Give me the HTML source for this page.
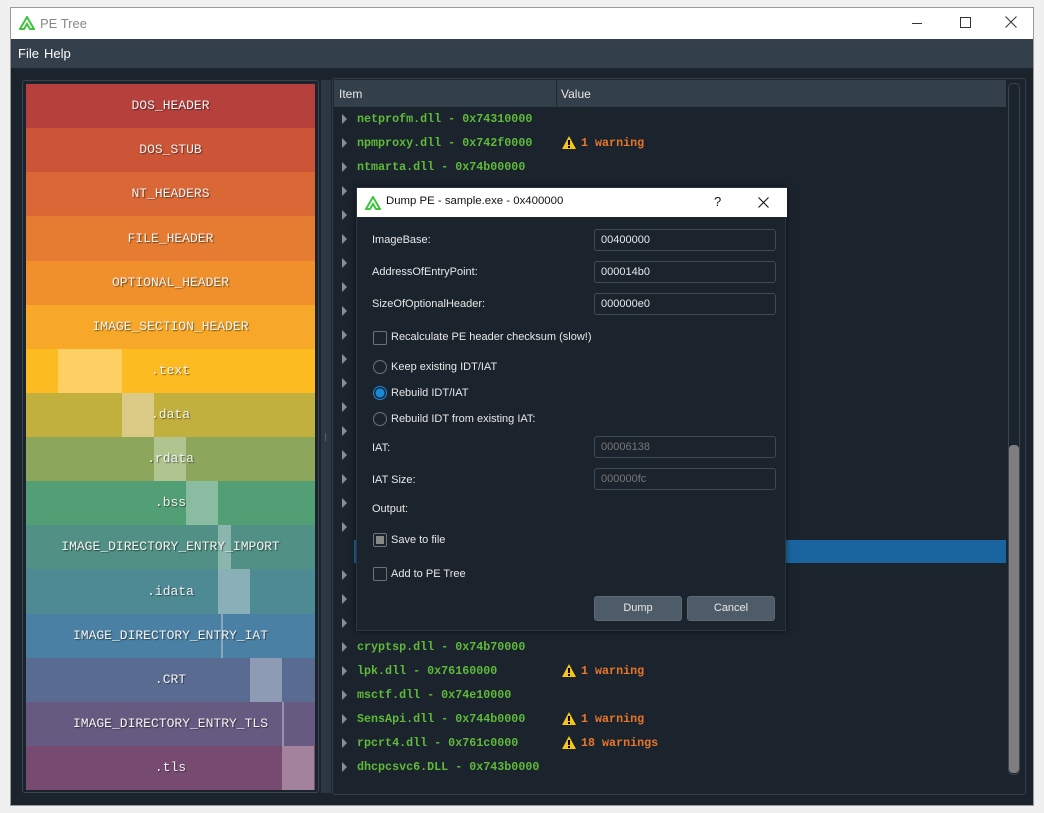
<!DOCTYPE html>
<html><head><meta charset="utf-8"><style>
*{box-sizing:border-box;margin:0;padding:0}
body{width:1044px;height:813px;background:#f0f0f0;position:relative;overflow:hidden;font-family:"Liberation Sans",sans-serif}
.abs{position:absolute}
#win{left:10px;top:7px;width:1024px;height:799px;border:1px solid #9a9a9a;background:#1b232d}
#title{left:0;top:0;width:1022px;height:31px;background:#fff}
#menu{left:0;top:31px;width:1022px;height:29px;background:#333f4a;color:#fff;font-size:13px}
.blk{position:absolute;left:26px;width:289px;height:44px;color:#f4f4f4;font-family:"Liberation Mono",monospace;font-size:13px;text-align:center;line-height:44px;text-shadow:1px 1px 1px rgba(0,0,0,.5)}
.hl{position:absolute}
.row{position:absolute;left:335px;height:24px;width:670px;font-family:"Liberation Mono",monospace;font-weight:bold;font-size:11.7px;line-height:24px}
.arr{position:absolute;left:7px;top:7px;width:0;height:0;border-top:5px solid transparent;border-bottom:5px solid transparent;border-left:5px solid #8a8f94}
.nm{position:absolute;left:22px;color:#5fba3a}
.wr{position:absolute;left:226px;color:#e8762a}
.tri{position:absolute;left:0;top:4px;width:16px;height:15px}
.lbl{position:absolute;left:15px;color:#e8e8e8;font-size:11px}
.inp{position:absolute;left:237px;width:182px;height:22px;border:1px solid #3e4a56;border-radius:3px;background:#1b232d;color:#e8e8e8;font-size:11px;line-height:20px;padding-left:6px}
.cb{position:absolute;left:16px;width:14px;height:14px;border:1px solid #6a737c;border-radius:2px}
.rd{position:absolute;left:16px;width:14px;height:14px;border:1px solid #6a737c;border-radius:50%}
.btn{position:absolute;top:408px;height:25px;width:88px;background:#4e5c69;border:1px solid #5c6873;border-radius:3px;color:#e8e8e8;font-size:11px;text-align:center;line-height:23px}
</style></head><body>
<div id="win" class="abs">
 <div id="title" class="abs">
  <svg class="abs" style="left:8px;top:8px" width="16" height="14" viewBox="0 0 16 14"><path d="M8 1 L1 13 L5 13 L8 8 L11 13 L15 13 Z" fill="none" stroke="#3ec53e" stroke-width="2"/></svg>
  <div class="abs" style="left:29px;top:8px;font-size:13px;color:#888">PE Tree</div>
  <div class="abs" style="left:901px;top:15px;width:10px;height:1px;background:#333"></div>
  <div class="abs" style="left:949px;top:9px;width:11px;height:11px;border:1px solid #333"></div>
  <svg class="abs" style="left:994px;top:8px" width="12" height="12" viewBox="0 0 12 12"><path d="M0.5 0.5 L11.5 11.5 M11.5 0.5 L0.5 11.5" stroke="#333" stroke-width="1"/></svg>
 </div>
 <div id="menu" class="abs"><span class="abs" style="left:7px;top:7px">File</span><span class="abs" style="left:33px;top:7px">Help</span></div>
</div>
<!-- left panel -->
<div class="abs" style="left:22px;top:80px;width:297px;height:713px;border:1px solid #3a4550;border-radius:3px;background:#1b232d"></div>
<div class="abs" style="left:321px;top:80px;width:10px;height:713px;background:#2c3741"></div>
<div class="abs" style="left:325px;top:433px;width:1px;height:8px;background:#55606a"></div>
<div class="blk" style="top:84px;background:#b6403c">DOS_HEADER</div>
<div class="blk" style="top:128px;background:#cb5536">DOS_STUB</div>
<div class="blk" style="top:172px;background:#da6837">NT_HEADERS</div>
<div class="blk" style="top:216px;background:#e57c31;height:45px;line-height:45px">FILE_HEADER</div>
<div class="blk" style="top:261px;background:#f0902d">OPTIONAL_HEADER</div>
<div class="blk" style="top:305px;background:#f7a828">IMAGE_SECTION_HEADER</div>
<div class="blk" style="top:349px;background:#fdbb22"><div class="hl" style="left:32px;top:0;width:64px;height:44px;background:#fed064"></div><span style="position:relative">.text</span></div>
<div class="blk" style="top:393px;background:#c2b03e"><div class="hl" style="left:96px;top:0;width:32px;height:44px;background:#d9ca86"></div><span style="position:relative">.data</span></div>
<div class="blk" style="top:437px;background:#8ca65b"><div class="hl" style="left:128px;top:0;width:32px;height:44px;background:#b0c490"></div><span style="position:relative">.rdata</span></div>
<div class="blk" style="top:481px;background:#529e75"><div class="hl" style="left:160px;top:0;width:32px;height:44px;background:#8abca2"></div><span style="position:relative">.bss</span></div>
<div class="blk" style="top:525px;background:#519084"><div class="hl" style="left:192px;top:0;width:13px;height:44px;background:#8ab6ae"></div><span style="position:relative">IMAGE_DIRECTORY_ENTRY_IMPORT</span></div>
<div class="blk" style="top:569px;background:#4d8a94;height:45px;line-height:45px"><div class="hl" style="left:192px;top:0;width:32px;height:45px;background:#88b0b6"></div><span style="position:relative">.idata</span></div>
<div class="blk" style="top:614px;background:#4a80a3"><div class="hl" style="left:195px;top:0;width:2px;height:44px;background:#88a8c0"></div><span style="position:relative">IMAGE_DIRECTORY_ENTRY_IAT</span></div>
<div class="blk" style="top:658px;background:#5a6b92"><div class="hl" style="left:224px;top:0;width:32px;height:44px;background:#8e9bb4"></div><span style="position:relative">.CRT</span></div>
<div class="blk" style="top:702px;background:#675a80"><div class="hl" style="left:256px;top:0;width:2px;height:44px;background:#9a8fae"></div><span style="position:relative">IMAGE_DIRECTORY_ENTRY_TLS</span></div>
<div class="blk" style="top:746px;background:#774a72"><div class="hl" style="left:256px;top:0;width:32px;height:44px;background:#a2829c"></div><span style="position:relative">.tls</span></div>
<!-- right panel -->
<div class="abs" style="left:332px;top:78px;width:694px;height:717px;border:1px solid #333f4a;border-radius:3px"></div>
<div class="abs" style="left:334px;top:80px;width:672px;height:27px;background:#333f4a;color:#e8e8e8;font-size:12px"><span class="abs" style="left:5px;top:7px">Item</span><div class="abs" style="left:222px;top:0;width:1px;height:27px;background:#222b34"></div><span class="abs" style="left:227px;top:7px">Value</span></div>
<div class="abs" style="left:354px;top:540px;width:652px;height:23px;background:#1a65a0"></div>
<div class="abs" style="left:1008px;top:83px;width:12px;height:692px;border:1px solid #3a4550;border-radius:5px"></div>
<div class="abs" style="left:1009px;top:445px;width:10px;height:328px;background:#7e7e7e;border-radius:4px"></div>
<div class="row" style="top:107px"><i class="arr"></i><span class="nm">netprofm.dll - 0x74310000</span></div>
<div class="row" style="top:131px"><i class="arr"></i><span class="nm">npmproxy.dll - 0x742f0000</span><span class="wr"><svg class="tri" viewBox="0 0 16 15"><path d="M8 1 L15 14 L1 14Z" fill="#f5c518"/><rect x="7" y="5" width="2" height="5" fill="#000"/><rect x="7" y="11" width="2" height="2" fill="#000"/></svg><span style="margin-left:20px">1 warning</span></span></div>
<div class="row" style="top:155px"><i class="arr"></i><span class="nm">ntmarta.dll - 0x74b00000</span></div>
<div class="row" style="top:179px"><i class="arr"></i></div>
<div class="row" style="top:203px"><i class="arr"></i></div>
<div class="row" style="top:227px"><i class="arr"></i></div>
<div class="row" style="top:251px"><i class="arr"></i></div>
<div class="row" style="top:275px"><i class="arr"></i></div>
<div class="row" style="top:299px"><i class="arr"></i></div>
<div class="row" style="top:323px"><i class="arr"></i></div>
<div class="row" style="top:347px"><i class="arr"></i></div>
<div class="row" style="top:371px"><i class="arr"></i></div>
<div class="row" style="top:395px"><i class="arr"></i></div>
<div class="row" style="top:419px"><i class="arr"></i></div>
<div class="row" style="top:443px"><i class="arr"></i></div>
<div class="row" style="top:467px"><i class="arr"></i></div>
<div class="row" style="top:491px"><i class="arr"></i></div>
<div class="row" style="top:515px"><i class="arr"></i></div>
<div class="row" style="top:563px"><i class="arr"></i></div>
<div class="row" style="top:587px"><i class="arr"></i></div>
<div class="row" style="top:611px"><i class="arr"></i></div>
<div class="row" style="top:635px"><i class="arr"></i><span class="nm">cryptsp.dll - 0x74b70000</span></div>
<div class="row" style="top:659px"><i class="arr"></i><span class="nm">lpk.dll - 0x76160000</span><span class="wr"><svg class="tri" viewBox="0 0 16 15"><path d="M8 1 L15 14 L1 14Z" fill="#f5c518"/><rect x="7" y="5" width="2" height="5" fill="#000"/><rect x="7" y="11" width="2" height="2" fill="#000"/></svg><span style="margin-left:20px">1 warning</span></span></div>
<div class="row" style="top:683px"><i class="arr"></i><span class="nm">msctf.dll - 0x74e10000</span></div>
<div class="row" style="top:707px"><i class="arr"></i><span class="nm">SensApi.dll - 0x744b0000</span><span class="wr"><svg class="tri" viewBox="0 0 16 15"><path d="M8 1 L15 14 L1 14Z" fill="#f5c518"/><rect x="7" y="5" width="2" height="5" fill="#000"/><rect x="7" y="11" width="2" height="2" fill="#000"/></svg><span style="margin-left:20px">1 warning</span></span></div>
<div class="row" style="top:731px"><i class="arr"></i><span class="nm">rpcrt4.dll - 0x761c0000</span><span class="wr"><svg class="tri" viewBox="0 0 16 15"><path d="M8 1 L15 14 L1 14Z" fill="#f5c518"/><rect x="7" y="5" width="2" height="5" fill="#000"/><rect x="7" y="11" width="2" height="2" fill="#000"/></svg><span style="margin-left:20px">18 warnings</span></span></div>
<div class="row" style="top:755px"><i class="arr"></i><span class="nm">dhcpcsvc6.DLL - 0x743b0000</span></div>
<!-- dialog -->
<div class="abs" style="left:356px;top:187px;width:430px;height:444px;background:#1b232d;border:1px solid #2c3640;box-shadow:0 0 6px rgba(0,0,0,.5)">
 <div class="abs" style="left:0;top:0;width:430px;height:29px;background:#fff">
  <svg class="abs" style="left:8px;top:8px" width="16" height="14" viewBox="0 0 16 14"><path d="M8 1 L1 13 L5 13 L8 8 L11 13 L15 13 Z" fill="none" stroke="#3ec53e" stroke-width="2"/></svg>
  <span class="abs" style="left:29px;top:7px;font-size:11.4px;color:#111">Dump PE - sample.exe - 0x400000</span>
  <span class="abs" style="left:357px;top:6px;font-size:13px;color:#111">?</span>
  <svg class="abs" style="left:401px;top:9px" width="11" height="11" viewBox="0 0 11 11"><path d="M0.5 0.5 L10.5 10.5 M10.5 0.5 L0.5 10.5" stroke="#111" stroke-width="1.1"/></svg>
 </div>
 <span class="lbl" style="top:46px">ImageBase:</span><div class="inp" style="top:41px">00400000</div>
 <span class="lbl" style="top:78px">AddressOfEntryPoint:</span><div class="inp" style="top:73px">000014b0</div>
 <span class="lbl" style="top:110px">SizeOfOptionalHeader:</span><div class="inp" style="top:105px">000000e0</div>
 <div class="cb" style="top:143px"></div><span class="lbl" style="left:34px;top:143px">Recalculate PE header checksum (slow!)</span>
 <div class="rd" style="top:172px"></div><span class="lbl" style="left:34px;top:173px">Keep existing IDT/IAT</span>
 <div class="rd" style="top:198px;border-color:#1a8ad8;background:radial-gradient(circle,#1a8ad8 0,#1a8ad8 4px,#1b232d 5px)"></div><span class="lbl" style="left:34px;top:199px">Rebuild IDT/IAT</span>
 <div class="rd" style="top:224px"></div><span class="lbl" style="left:34px;top:225px">Rebuild IDT from existing IAT:</span>
 <span class="lbl" style="top:254px">IAT:</span><div class="inp" style="top:248px;color:#777">00006138</div>
 <span class="lbl" style="top:286px">IAT Size:</span><div class="inp" style="top:280px;color:#777">000000fc</div>
 <span class="lbl" style="top:315px">Output:</span>
 <div class="cb" style="top:345px;background:#1b232d"><div style="position:absolute;left:2px;top:2px;width:8px;height:8px;background:#888"></div></div><span class="lbl" style="left:34px;top:346px">Save to file</span>
 <div class="cb" style="top:379px"></div><span class="lbl" style="left:34px;top:380px">Add to PE Tree</span>
 <div class="btn" style="left:237px">Dump</div>
 <div class="btn" style="left:330px">Cancel</div>
</div>
</body></html>
